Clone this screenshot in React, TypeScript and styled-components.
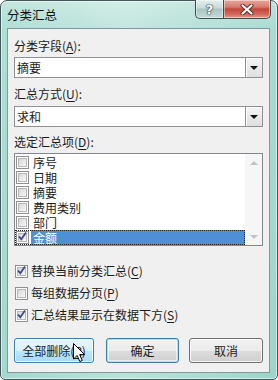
import * as React from 'react';
import styled, { createGlobalStyle, css } from 'styled-components';

const GlobalStyle = createGlobalStyle`
  html, body {
    margin: 0;
    padding: 0;
  }
  body {
    width: 278px;
    height: 380px;
    overflow: hidden;
    background: #fff;
    font-family: "Noto Sans CJK SC", "Microsoft YaHei", sans-serif;
    font-size: 12px;
    color: #1b1b1b;
  }
`;

const Frame = styled.div`
  box-sizing: border-box;
  width: 278px;
  height: 380px;
  border: 1px solid #41575b;
  border-radius: 7px 7px 5px 5px;
  padding: 0 7px 6px 6px;
  display: flex;
  flex-direction: column;
  background:
    linear-gradient(90deg, rgba(255, 255, 255, 0.12), rgba(255, 255, 255, 0.35) 45%, rgba(255, 255, 255, 0.05)),
    linear-gradient(180deg, #b9e3da 0, #a3d9ce 30px, #97d3c6 100%);
  box-shadow: inset 0 0 0 1px rgba(255, 255, 255, 0.55);
`;

const TitleBar = styled.div`
  height: 27px;
  display: flex;
  align-items: flex-start;
`;

const Title = styled.div`
  padding-top: 5px;
  font-size: 12.5px;
  line-height: 17px;
  color: #111;
`;

const CaptionButtons = styled.div`
  margin-left: auto;
  margin-right: -1px;
  margin-top: -1px;
  display: flex;
`;

const captionBase = css`
  box-sizing: border-box;
  height: 19px;
  border: 1px solid #3d4c53;
  border-top: none;
  display: flex;
  align-items: center;
  justify-content: center;
  box-shadow: inset 0 0 0 1px rgba(255, 255, 255, 0.45);
`;

const HelpButton = styled.div`
  ${captionBase};
  width: 28px;
  border-right: none;
  border-radius: 0 0 0 5px;
  background: linear-gradient(180deg, #e4efee 0, #c8dbd9 45%, #a9c4c1 50%, #c4dcd8 100%);
  font-family: "DejaVu Sans", sans-serif;
  font-weight: bold;
  font-size: 13px;
  color: #fff;
  text-shadow: 0 0 1px #2f3b40, 0 0 1px #2f3b40, 0 0 2px #2f3b40;
`;

const CloseButton = styled.div`
  ${captionBase};
  width: 48px;
  border-radius: 0 0 5px 0;
  background: linear-gradient(180deg, #e8a89d 0, #d6796c 40%, #c2463a 50%, #d0695b 80%, #e39a8c 100%);
`;

const Client = styled.div`
  flex: 1;
  box-sizing: border-box;
  border: 1px solid #7e9a9d;
  background: #f0f0f0;
  padding: 9px 6px 9px 6px;
  display: flex;
  flex-direction: column;
`;

const Label = styled.div<{ $top?: number; $bottom?: number }>`
  line-height: 16px;
  margin-top: ${(p) => p.$top ?? 0}px;
  margin-bottom: ${(p) => p.$bottom ?? 0}px;
  white-space: nowrap;
`;

const Combo = styled.div`
  box-sizing: border-box;
  height: 21px;
  border: 1px solid #8e9297;
  background: #fff;
  display: flex;
  align-items: center;
`;

const ComboText = styled.div`
  flex: 1;
  padding-left: 2px;
  line-height: 19px;
`;

const DropButton = styled.div`
  box-sizing: border-box;
  width: 17px;
  height: 19px;
  border-left: 1px solid #8e9297;
  background: linear-gradient(180deg, #f6f6f6, #dedede);
  display: flex;
  align-items: center;
  justify-content: center;
  box-shadow: inset 1px 1px 0 #fff;

  &::before {
    content: '';
    border-left: 4px solid transparent;
    border-right: 4px solid transparent;
    border-top: 4px solid #111;
  }
`;

const ListBox = styled.div`
  box-sizing: border-box;
  height: 93px;
  border: 1px solid #828790;
  background: #fff;
  display: flex;
`;

const Items = styled.div`
  flex: 1;
  padding-top: 1px;
`;

const Row = styled.div<{ $focused?: boolean }>`
  height: 15px;
  display: flex;
  align-items: center;
  padding-left: 1px;
  ${(p) =>
    p.$focused &&
    css`
      outline: 1px dotted #222;
      outline-offset: -1px;
    `}
`;

const ItemText = styled.span<{ $selected?: boolean }>`
  flex: 1;
  height: 15px;
  line-height: 15px;
  margin-left: 2px;
  padding-left: 2px;
  color: ${(p) => (p.$selected ? '#fff' : '#1b1b1b')};
  background: ${(p) => (p.$selected ? '#4f8fd6' : 'transparent')};
`;

const ScrollBar = styled.div`
  width: 17px;
  background: #f6f6f6;
  display: flex;
  flex-direction: column;
  justify-content: space-between;
`;

const ScrollArrow = styled.div<{ $down?: boolean }>`
  height: 17px;
  display: flex;
  align-items: center;
  justify-content: center;

  &::before {
    content: '';
    border-left: 4px solid transparent;
    border-right: 4px solid transparent;
    ${(p) =>
      p.$down
        ? css`border-top: 4px solid #c4c4c4;`
        : css`border-bottom: 4px solid #c4c4c4;`}
  }
`;

const Box = styled.span`
  box-sizing: border-box;
  width: 13px;
  height: 13px;
  flex: 0 0 13px;
  border: 1px solid #8f8f8f;
  background: #fff;
  padding: 1px;
  display: flex;
`;

const BoxInner = styled.span`
  flex: 1;
  border: 1px solid #b8b8b8;
  background: linear-gradient(135deg, #d6d6d6 0, #ececec 60%, #f9f9f9 100%);
  position: relative;
`;

const CheckMark = styled.svg`
  position: absolute;
  left: -2px;
  top: -3px;
`;

const Checkbox = ({ checked }: { checked?: boolean }) => (
  <Box>
    <BoxInner>
      {checked && (
        <CheckMark width="11" height="11" viewBox="0 0 11 11">
          <path d="M2 5.5 L4.3 8.2 L9 1.5" fill="none" stroke="#3d4890" strokeWidth="1.8" />
        </CheckMark>
      )}
    </BoxInner>
  </Box>
);

const Options = styled.div`
  margin-top: 14px;
`;

const OptionRow = styled.div`
  height: 22px;
  display: flex;
  align-items: center;
  padding-left: 1px;
`;

const OptionText = styled.span`
  margin-left: 3px;
  line-height: 16px;
`;

const ButtonRow = styled.div`
  margin-top: auto;
  display: flex;
`;

type Variant = 'hover' | 'default' | 'normal';

const Button = styled.div<{ $width: number; $gap?: number; $variant: Variant }>`
  position: relative;
  box-sizing: border-box;
  width: ${(p) => p.$width}px;
  height: 25px;
  margin-left: ${(p) => p.$gap ?? 0}px;
  border-radius: 3px;
  display: flex;
  align-items: center;
  justify-content: center;
  line-height: 16px;
  border: 1px solid ${(p) => (p.$variant === 'normal' ? '#707070' : '#3c7fb1')};
  background: ${(p) =>
    p.$variant === 'hover'
      ? 'linear-gradient(180deg, #eaf6fd 0, #d9f0fc 50%, #bee6fd 51%, #a7d9f5 100%)'
      : 'linear-gradient(180deg, #f2f2f2 0, #ebebeb 50%, #dddddd 51%, #cfcfcf 100%)'};
  box-shadow: ${(p) =>
    p.$variant === 'default'
      ? 'inset 0 0 0 1px #a9e0f7, inset 0 0 0 2px rgba(255,255,255,0.6)'
      : 'inset 0 0 0 1px rgba(255,255,255,0.8)'};
`;

const Cursor = styled.svg`
  position: absolute;
  left: 58px;
  top: 4px;
`;

const Access = styled.u`
  text-decoration-thickness: 1px;
  text-underline-offset: 2px;
`;

const items = ['序号', '日期', '摘要', '费用类别', '部门', '金额'];

export default function App() {
  return (
    <>
      <GlobalStyle />
      <Frame>
        <TitleBar>
          <Title>分类汇总</Title>
          <CaptionButtons>
            <HelpButton>?</HelpButton>
            <CloseButton>
              <svg width="14" height="11" viewBox="0 0 14 11">
                <path d="M2.5 1.5 L11.5 9.5 M11.5 1.5 L2.5 9.5" stroke="#5a2a25" strokeWidth="4" strokeLinecap="round" />
                <path d="M2.5 1.5 L11.5 9.5 M11.5 1.5 L2.5 9.5" stroke="#fff" strokeWidth="2.2" strokeLinecap="round" />
              </svg>
            </CloseButton>
          </CaptionButtons>
        </TitleBar>
        <Client>
          <Label $bottom={3}>
            分类字段(<Access>A</Access>):
          </Label>
          <Combo>
            <ComboText>摘要</ComboText>
            <DropButton />
          </Combo>
          <Label $top={8} $bottom={4}>
            汇总方式(<Access>U</Access>):
          </Label>
          <Combo>
            <ComboText>求和</ComboText>
            <DropButton />
          </Combo>
          <Label $top={7} $bottom={3}>
            选定汇总项(<Access>D</Access>):
          </Label>
          <ListBox>
            <Items>
              {items.map((name, i) => {
                const selected = i === items.length - 1;
                return (
                  <Row key={name} $focused={selected}>
                    <Checkbox checked={selected} />
                    <ItemText $selected={selected}>{name}</ItemText>
                  </Row>
                );
              })}
            </Items>
            <ScrollBar>
              <ScrollArrow />
              <ScrollArrow $down />
            </ScrollBar>
          </ListBox>
          <Options>
            <OptionRow>
              <Checkbox checked />
              <OptionText>
                替换当前分类汇总(<Access>C</Access>)
              </OptionText>
            </OptionRow>
            <OptionRow>
              <Checkbox />
              <OptionText>
                每组数据分页(<Access>P</Access>)
              </OptionText>
            </OptionRow>
            <OptionRow>
              <Checkbox checked />
              <OptionText>
                汇总结果显示在数据下方(<Access>S</Access>)
              </OptionText>
            </OptionRow>
          </Options>
          <ButtonRow>
            <Button $width={80} $variant="hover">
              全部删除(<Access>R</Access>)
              <Cursor width="13" height="20" viewBox="0 0 13 20">
                <path
                  d="M0.5 0.5 L0.5 16 L4.2 12.4 L6.8 18.5 L9.2 17.5 L6.7 11.6 L11.6 11.6 Z"
                  fill="#fff"
                  stroke="#000"
                  strokeWidth="1"
                  strokeLinejoin="round"
                />
              </Cursor>
            </Button>
            <Button $width={73} $gap={12} $variant="default">
              确定
            </Button>
            <Button $width={74} $gap={10} $variant="normal">
              取消
            </Button>
          </ButtonRow>
        </Client>
      </Frame>
    </>
  );
}
